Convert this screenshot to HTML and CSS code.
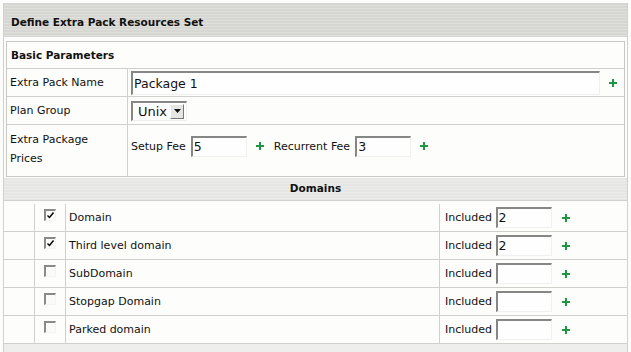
FILE: index.html
```html
<!DOCTYPE html>
<html lang="en">
<head>
    <meta charset="UTF-8">
    <title>Define Extra Pack Resources Set</title>
    <link rel="stylesheet" href="styles.css">
</head>
<body>
    <div class="page">
        <div class="title">Define Extra Pack Resources Set</div>
        <div class="box">
            <div class="box-head">Basic Parameters</div>
            <table class="params">
                <tr>
                    <td class="label">Extra Pack Name</td>
                    <td class="field">
                        <div class="line">
                            <span class="input wide">Package 1</span>
                            <svg class="plus" viewBox="0 0 8 8"><path d="M3 0h2v3h3v2H5v3H3V5H0V3h3z"/></svg>
                        </div>
                    </td>
                </tr>
                <tr>
                    <td class="label">Plan Group</td>
                    <td class="field">
                        <span class="select">Unix<span class="arrow"><svg viewBox="0 0 7 4"><path d="M0 0h7L3.5 4z"/></svg></span></span>
                    </td>
                </tr>
                <tr class="tall">
                    <td class="label">Extra Package<br>Prices</td>
                    <td class="field">
                        <div class="line">
                            Setup Fee <span class="input small">5</span>
                            <svg class="plus" viewBox="0 0 8 8"><path d="M3 0h2v3h3v2H5v3H3V5H0V3h3z"/></svg>
                            <span class="gap">Recurrent Fee</span> <span class="input small">3</span>
                            <svg class="plus" viewBox="0 0 8 8"><path d="M3 0h2v3h3v2H5v3H3V5H0V3h3z"/></svg>
                        </div>
                    </td>
                </tr>
            </table>
        </div>
        <div class="section">Domains</div>
        <table class="domains">
            <tr>
                <td class="blank"></td>
                <td class="check"><span class="cb"><svg viewBox="0 0 9 9"><path d="M1.5 4.5l2 2 4-5"/></svg></span></td>
                <td class="name">Domain</td>
                <td class="inc">Included <span class="input small">2</span> <svg class="plus" viewBox="0 0 8 8"><path d="M3 0h2v3h3v2H5v3H3V5H0V3h3z"/></svg></td>
            </tr>
            <tr>
                <td class="blank"></td>
                <td class="check"><span class="cb"><svg viewBox="0 0 9 9"><path d="M1.5 4.5l2 2 4-5"/></svg></span></td>
                <td class="name">Third level domain</td>
                <td class="inc">Included <span class="input small">2</span> <svg class="plus" viewBox="0 0 8 8"><path d="M3 0h2v3h3v2H5v3H3V5H0V3h3z"/></svg></td>
            </tr>
            <tr>
                <td class="blank"></td>
                <td class="check"><span class="cb"></span></td>
                <td class="name">SubDomain</td>
                <td class="inc">Included <span class="input small"></span> <svg class="plus" viewBox="0 0 8 8"><path d="M3 0h2v3h3v2H5v3H3V5H0V3h3z"/></svg></td>
            </tr>
            <tr>
                <td class="blank"></td>
                <td class="check"><span class="cb"></span></td>
                <td class="name">Stopgap Domain</td>
                <td class="inc">Included <span class="input small"></span> <svg class="plus" viewBox="0 0 8 8"><path d="M3 0h2v3h3v2H5v3H3V5H0V3h3z"/></svg></td>
            </tr>
            <tr>
                <td class="blank"></td>
                <td class="check"><span class="cb"></span></td>
                <td class="name">Parked domain</td>
                <td class="inc">Included <span class="input small"></span> <svg class="plus" viewBox="0 0 8 8"><path d="M3 0h2v3h3v2H5v3H3V5H0V3h3z"/></svg></td>
            </tr>
        </table>
        <div class="foot"></div>
    </div>
</body>
</html>
```

FILE: styles.css
```css
body {
    margin: 0;
    background-color: #fcfcfa;
    font-family: "DejaVu Sans", Verdana, sans-serif;
    font-size: 11px;
    color: #111;
}
.page {
    margin: 3px 3px 0 3px;
    border-right: 1px solid #d0d0cc;
    border-left: 1px solid #d0d0cc;
    height: 349px;
    overflow: hidden;
}
.title {
    height: 34px;
    line-height: 38px;
    padding-left: 7px;
    font-weight: bold;
    font-size: 10.5px;
    background: repeating-linear-gradient(#d6d7d3 0px, #d6d7d3 2px, #dfe0dc 2px, #dfe0dc 3px);
}
.box {
    margin: 4px 2px 0 2px;
    border: 1px solid #c8c8c4;
    background-color: #fdfdfb;
}
.box-head {
    height: 26px;
    line-height: 27px;
    padding-left: 4px;
    font-weight: bold;
    font-size: 10.5px;
}
.params {
    width: 100%;
    border-collapse: collapse;
}
.params td {
    border-top: 1px solid #d0d0cc;
    height: 27px;
    padding: 0 0 0 3px;
}
.params tr.tall td {
    height: 42px;
}
.params tr.tall td.label {
    padding-bottom: 4px;
}
.params tr.tall td.field {
    padding-bottom: 9px;
}
.params td.label {
    width: 117px;
    border-right: 1px solid #d0d0cc;
    line-height: 19px;
}
.line {
    display: flex;
    align-items: center;
}
.input {
    display: inline-block;
    box-sizing: border-box;
    height: 21px;
    line-height: 18px;
    padding-left: 1px;
    border-top: 2px solid #868684;
    border-left: 2px solid #868684;
    border-right: 1px solid #f0f0ee;
    border-bottom: 1px solid #f0f0ee;
    background-color: #fefefe;
    font-size: 12.5px;
    vertical-align: middle;
}
.wide {
    width: 469px;
    height: 24px;
    line-height: 21px;
}
.small {
    width: 56px;
    margin-left: 5px;
}
.plus {
    width: 8px;
    height: 8px;
    fill: #1f9643;
    margin-left: 9px;
    vertical-align: middle;
}
.gap {
    margin-left: 10px;
}
.select {
    display: inline-flex;
    align-items: center;
    box-sizing: border-box;
    width: 56px;
    height: 20px;
    padding-left: 5px;
    border-top: 2px solid #868684;
    border-left: 2px solid #868684;
    border-right: 1px solid #f0f0ee;
    border-bottom: 1px solid #f0f0ee;
    font-size: 13px;
    background-color: #fefefe;
}
.arrow {
    margin-left: auto;
    margin-right: 2px;
    width: 14px;
    height: 15px;
    box-sizing: border-box;
    border: 1px solid #fff;
    border-right-color: #777;
    border-bottom-color: #777;
    background-color: #e6e6e4;
    display: flex;
    align-items: center;
    justify-content: center;
}
.arrow svg {
    width: 7px;
    height: 4px;
    fill: #111;
}
.section {
    margin-top: 1px;
    height: 22px;
    line-height: 21px;
    text-align: center;
    font-weight: bold;
    font-size: 10.5px;
    border-bottom: 1px solid #d0d0cc;
    background: repeating-linear-gradient(#e6e7e4 0px, #e6e7e4 2px, #ecedea 2px, #ecedea 3px);
}
.domains {
    width: 100%;
    border-collapse: collapse;
    background-color: #fdfdfb;
    margin-top: 3px;
}
.domains td {
    height: 27px;
    border-bottom: 1px solid #d0d0cc;
    padding: 0;
}
.domains td.blank {
    width: 30px;
    border-right: 1px solid #d0d0cc;
}
.domains td.check {
    width: 30px;
    text-align: center;
}
.domains td.name {
    border-left: 1px solid #d0d0cc;
    border-right: 1px solid #d0d0cc;
    padding-left: 3px;
}
.domains td.inc {
    width: 182px;
    padding-left: 5px;
}
.domains td.inc .input {
    margin-left: 0;
    margin-right: 6px;
}
.domains td.inc .plus {
    margin-left: 1px;
}
.cb {
    display: inline-block;
    box-sizing: border-box;
    width: 12px;
    height: 12px;
    border-top: 2px solid #8a8a88;
    border-left: 2px solid #8a8a88;
    border-right: 1px solid #f4f4f2;
    border-bottom: 1px solid #f4f4f2;
    background-color: #fafaf8;
    vertical-align: middle;
    position: relative;
    top: -3px;
}
.cb svg {
    display: block;
    width: 9px;
    height: 9px;
    fill: none;
    stroke: #000;
    stroke-width: 1.4;
}
.foot {
    height: 10px;
    background-color: #eeeeec;
}
```
